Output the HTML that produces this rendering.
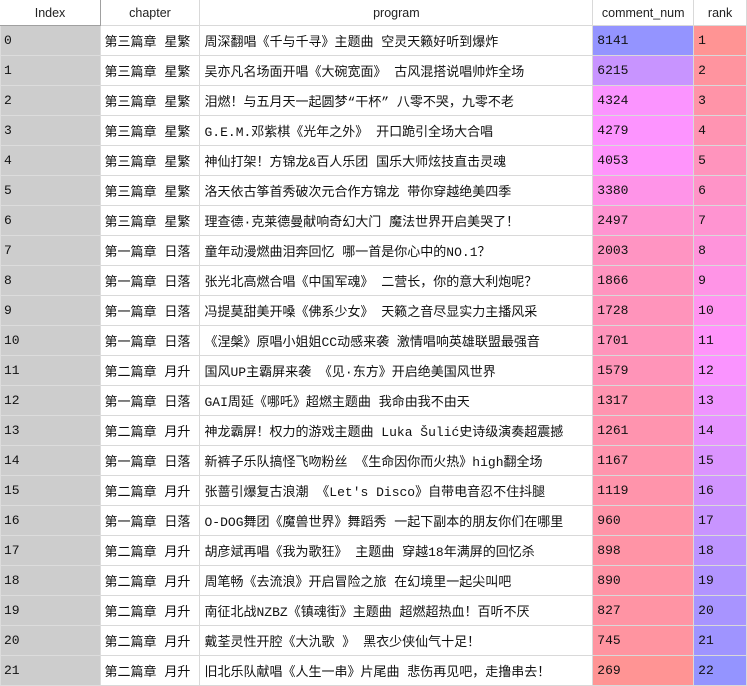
<!DOCTYPE html>
<html><head><meta charset="utf-8"><style>
body{margin:0;background:#fff;width:747px;height:685px;overflow:hidden}
table{border-collapse:collapse;table-layout:fixed;font-family:"Liberation Mono","Noto Sans CJK SC",monospace;font-size:13px;color:#111}
td,th{height:29px;border:1px solid #d9d9d9;padding:0 0 0 4px;white-space:nowrap;overflow:hidden;text-align:left}
th{height:25px;font-family:"Liberation Sans","Noto Sans CJK SC",sans-serif;font-size:12.5px;font-weight:normal;text-align:center;padding:0;color:#222;background:#fff;border-top:none}
th.i{border:1px solid #a0a0a0;border-top:none;border-left:none}
td.i{background:#cdcdcd;border-color:#dcdcdc;padding-left:3px}
</style></head><body>
<table>
<colgroup><col style="width:100px"><col style="width:100px"><col style="width:393px"><col style="width:101px"><col style="width:53px"></colgroup>
<tr><th class="i">Index</th><th>chapter</th><th>program</th><th>comment_num</th><th>rank</th></tr>
<tr><td class="i">0</td><td>第三篇章 星繁</td><td>周深翻唱《千与千寻》主题曲 空灵天籁好听到爆炸</td><td style="background:hsl(240,100%,79%)">8141</td><td style="background:hsl(360,100%,79%)">1</td></tr>
<tr><td class="i">1</td><td>第三篇章 星繁</td><td>吴亦凡名场面开唱《大碗宽面》 古风混搭说唱帅炸全场</td><td style="background:hsl(269,100%,79%)">6215</td><td style="background:hsl(354,100%,79%)">2</td></tr>
<tr><td class="i">2</td><td>第三篇章 星繁</td><td>泪燃！与五月天一起圆梦“干杯” 八零不哭，九零不老</td><td style="background:hsl(298,100%,79%)">4324</td><td style="background:hsl(349,100%,79%)">3</td></tr>
<tr><td class="i">3</td><td>第三篇章 星繁</td><td>G.E.M.邓紫棋《光年之外》 开口跪引全场大合唱</td><td style="background:hsl(299,100%,79%)">4279</td><td style="background:hsl(343,100%,79%)">4</td></tr>
<tr><td class="i">4</td><td>第三篇章 星繁</td><td>神仙打架！方锦龙&amp;百人乐团 国乐大师炫技直击灵魂</td><td style="background:hsl(302,100%,79%)">4053</td><td style="background:hsl(337,100%,79%)">5</td></tr>
<tr><td class="i">5</td><td>第三篇章 星繁</td><td>洛天依古筝首秀破次元合作方锦龙 带你穿越绝美四季</td><td style="background:hsl(313,100%,79%)">3380</td><td style="background:hsl(331,100%,79%)">6</td></tr>
<tr><td class="i">6</td><td>第三篇章 星繁</td><td>理查德·克莱德曼献响奇幻大门  魔法世界开启美哭了！</td><td style="background:hsl(326,100%,79%)">2497</td><td style="background:hsl(326,100%,79%)">7</td></tr>
<tr><td class="i">7</td><td>第一篇章 日落</td><td>童年动漫燃曲泪奔回忆 哪一首是你心中的NO.1？</td><td style="background:hsl(334,100%,79%)">2003</td><td style="background:hsl(320,100%,79%)">8</td></tr>
<tr><td class="i">8</td><td>第一篇章 日落</td><td>张光北高燃合唱《中国军魂》 二营长，你的意大利炮呢？</td><td style="background:hsl(336,100%,79%)">1866</td><td style="background:hsl(314,100%,79%)">9</td></tr>
<tr><td class="i">9</td><td>第一篇章 日落</td><td>冯提莫甜美开嗓《佛系少女》 天籁之音尽显实力主播风采</td><td style="background:hsl(338,100%,79%)">1728</td><td style="background:hsl(309,100%,79%)">10</td></tr>
<tr><td class="i">10</td><td>第一篇章 日落</td><td>《涅槃》原唱小姐姐CC动感来袭 激情唱响英雄联盟最强音</td><td style="background:hsl(338,100%,79%)">1701</td><td style="background:hsl(303,100%,79%)">11</td></tr>
<tr><td class="i">11</td><td>第二篇章 月升</td><td>国风UP主霸屏来袭 《见·东方》开启绝美国风世界</td><td style="background:hsl(340,100%,79%)">1579</td><td style="background:hsl(297,100%,79%)">12</td></tr>
<tr><td class="i">12</td><td>第一篇章 日落</td><td>GAI周延《哪吒》超燃主题曲 我命由我不由天</td><td style="background:hsl(344,100%,79%)">1317</td><td style="background:hsl(291,100%,79%)">13</td></tr>
<tr><td class="i">13</td><td>第二篇章 月升</td><td>神龙霸屏！权力的游戏主题曲 Luka Šulić史诗级演奏超震撼</td><td style="background:hsl(345,100%,79%)">1261</td><td style="background:hsl(286,100%,79%)">14</td></tr>
<tr><td class="i">14</td><td>第一篇章 日落</td><td>新裤子乐队搞怪飞吻粉丝 《生命因你而火热》high翻全场</td><td style="background:hsl(346,100%,79%)">1167</td><td style="background:hsl(280,100%,79%)">15</td></tr>
<tr><td class="i">15</td><td>第二篇章 月升</td><td>张蔷引爆复古浪潮 《Let's Disco》自带电音忍不住抖腿</td><td style="background:hsl(347,100%,79%)">1119</td><td style="background:hsl(274,100%,79%)">16</td></tr>
<tr><td class="i">16</td><td>第一篇章 日落</td><td>O-DOG舞团《魔兽世界》舞蹈秀 一起下副本的朋友你们在哪里</td><td style="background:hsl(349,100%,79%)">960</td><td style="background:hsl(269,100%,79%)">17</td></tr>
<tr><td class="i">17</td><td>第二篇章 月升</td><td>胡彦斌再唱《我为歌狂》 主题曲 穿越18年满屏的回忆杀</td><td style="background:hsl(350,100%,79%)">898</td><td style="background:hsl(263,100%,79%)">18</td></tr>
<tr><td class="i">18</td><td>第二篇章 月升</td><td>周笔畅《去流浪》开启冒险之旅 在幻境里一起尖叫吧</td><td style="background:hsl(350,100%,79%)">890</td><td style="background:hsl(257,100%,79%)">19</td></tr>
<tr><td class="i">19</td><td>第二篇章 月升</td><td>南征北战NZBZ《镇魂街》主题曲 超燃超热血！百听不厌</td><td style="background:hsl(351,100%,79%)">827</td><td style="background:hsl(251,100%,79%)">20</td></tr>
<tr><td class="i">20</td><td>第二篇章 月升</td><td>戴荃灵性开腔《大氿歌 》 黑衣少侠仙气十足！</td><td style="background:hsl(353,100%,79%)">745</td><td style="background:hsl(246,100%,79%)">21</td></tr>
<tr><td class="i">21</td><td>第二篇章 月升</td><td>旧北乐队献唱《人生一串》片尾曲 悲伤再见吧，走撸串去！</td><td style="background:hsl(360,100%,79%)">269</td><td style="background:hsl(240,100%,79%)">22</td></tr>
</table>
</body></html>
